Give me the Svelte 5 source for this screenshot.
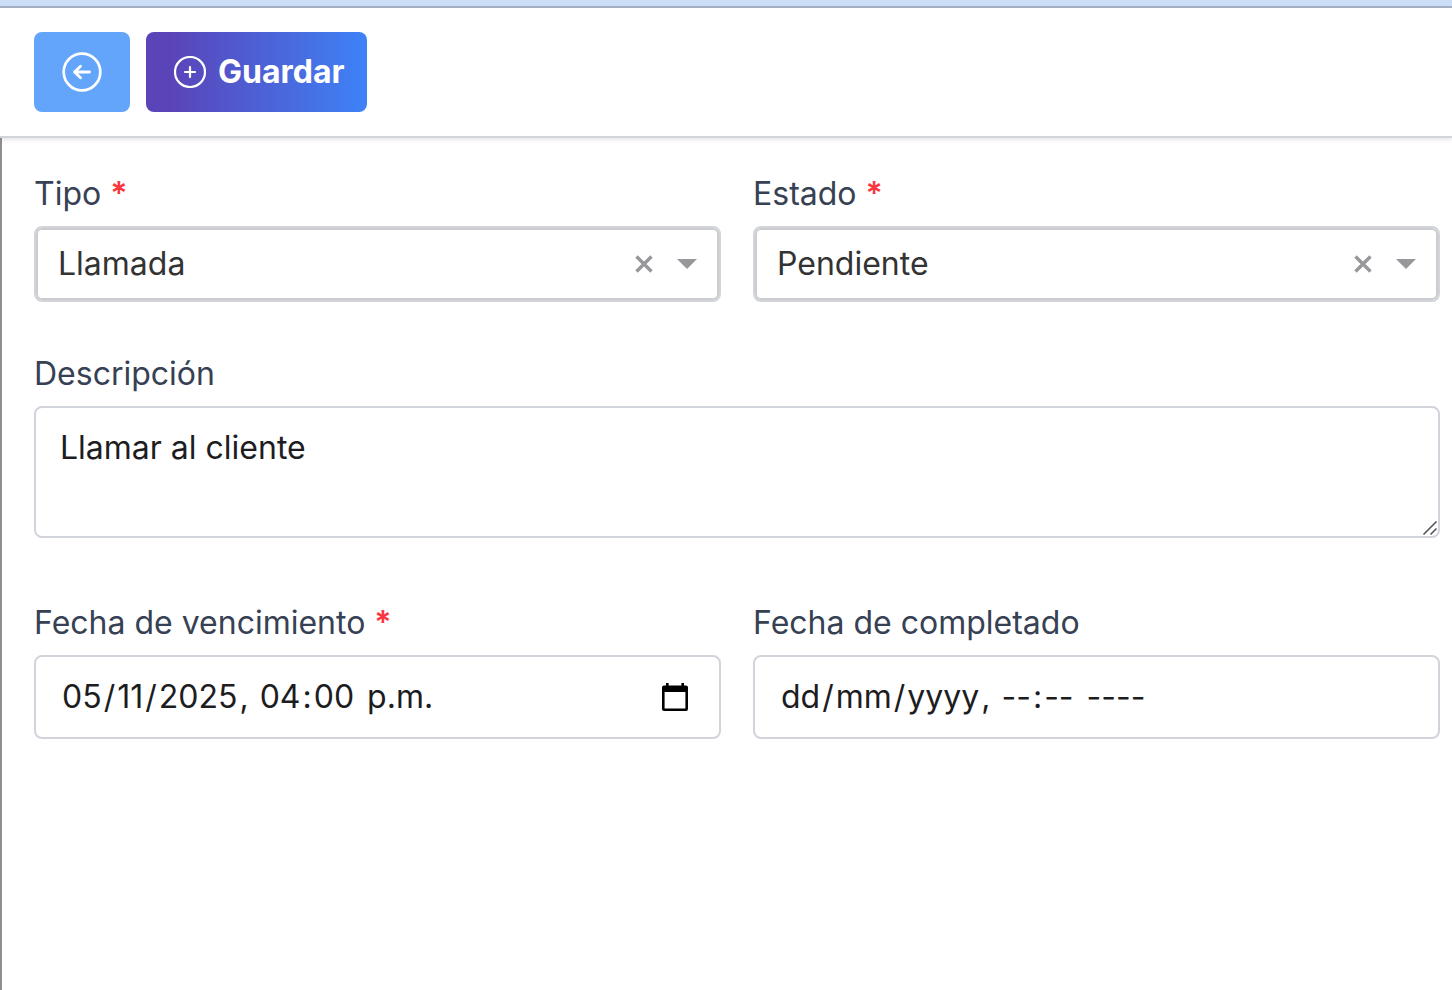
<script>
  const tipos = ['Llamada', 'Correo', 'Reunión'];
  const estados = ['Pendiente', 'Completado'];

  let tipo = $state('Llamada');
  let estado = $state('Pendiente');
  let descripcion = $state('Llamar al cliente');

  const segments = (d, m, y, h, min, p) => [
    { name: 'día', value: d, hint: 'dd', after: '/' },
    { name: 'mes', value: m, hint: 'mm', after: '/' },
    { name: 'año', value: y, hint: 'yyyy', after: ', ' },
    { name: 'hora', value: h, hint: '--', after: ':' },
    { name: 'minutos', value: min, hint: '--', after: ' ' },
    { name: 'a.m./p.m.', value: p, hint: '----', after: '' }
  ];

  let vencimiento = $state(segments('05', '11', '2025', '04', '00', 'p.m.'));
  let completado = $state(segments('', '', '', '', '', ''));
</script>

<div class="strip"></div>

<header class="toolbar">
  <button class="btn back" type="button" aria-label="Volver">
    <svg width="40" height="40" viewBox="0 0 40 40" fill="none" stroke="currentColor" stroke-linecap="round" stroke-linejoin="round">
      <circle cx="20" cy="20" r="18.3" stroke-width="2.7" />
      <path d="M27.5 20H12.5M18.5 14.2L12.5 20L18.5 25.8" stroke-width="2.8" />
    </svg>
  </button>
  <button class="btn save" type="submit" form="actividad">
    <svg width="32" height="32" viewBox="0 0 32 32" fill="none" stroke="currentColor" stroke-linecap="round">
      <circle cx="16" cy="16" r="15" stroke-width="2.2" />
      <path d="M16 11V21M11 16H21" stroke-width="2.2" />
    </svg>
    Guardar
  </button>
</header>

<main>
  <form id="actividad" onsubmit={(e) => e.preventDefault()}>
    <div class="field">
      <label for="tipo">Tipo <b>*</b></label>
      <div class="combo">
        <select id="tipo" bind:value={tipo}>
          {#each tipos as t}<option>{t}</option>{/each}
        </select>
        {@render controls(() => (tipo = ''))}
      </div>
    </div>

    <div class="field">
      <label for="estado">Estado <b>*</b></label>
      <div class="combo">
        <select id="estado" bind:value={estado}>
          {#each estados as t}<option>{t}</option>{/each}
        </select>
        {@render controls(() => (estado = ''))}
      </div>
    </div>

    <div class="field wide">
      <label for="descripcion">Descripción</label>
      <div class="area">
        <textarea id="descripcion" rows="2" bind:value={descripcion}></textarea>
        <svg class="grip" width="16" height="16" viewBox="0 0 16 16" stroke="#55555a" stroke-width="1.6" aria-hidden="true">
          <path d="M1.5 14.5L14.5 1.5M8.5 14.5L14.5 8.5" />
        </svg>
      </div>
    </div>

    <div class="field">
      <label for="vencimiento-0">Fecha de vencimiento <b>*</b></label>
      <div class="date">
        {@render dateParts('vencimiento', vencimiento)}
        <button class="plain" type="button" aria-label="Abrir calendario">
          <svg width="26" height="28" viewBox="0 0 26 28" fill="#000">
            <path fill-rule="evenodd" d="M4 0H6.6V2.6H19.4V0H22V2.6H24Q26 2.6 26 4.6V26Q26 28 24 28H2Q0 28 0 26V4.6Q0 2.6 2 2.6H4ZM2.6 9V25.4H23.4V9Z" />
          </svg>
        </button>
      </div>
    </div>

    <div class="field">
      <label for="completado-0">Fecha de completado</label>
      <div class="date">
        {@render dateParts('completado', completado)}
      </div>
    </div>
  </form>
</main>

{#snippet dateParts(id, parts)}
  <div class="parts">
    {#each parts as part, i}
      <input id={`${id}-${i}`} type="text" aria-label={part.name} placeholder={part.hint} maxlength={part.hint.length} bind:value={part.value} />{#if part.after}<span>{part.after}</span>{/if}
    {/each}
  </div>
{/snippet}

{#snippet controls(clear)}
  <button class="plain" type="button" aria-label="Limpiar" onclick={clear}>
    <svg width="18" height="18" viewBox="0 0 18 18" stroke="#98979c" stroke-width="3.4">
      <path d="M1.5 1.5L16.5 16.5M16.5 1.5L1.5 16.5" />
    </svg>
  </button>
  <svg class="caret" width="20" height="10" viewBox="0 0 20 10" fill="#98979c" aria-hidden="true">
    <path d="M0 0H20L10 10Z" />
  </svg>
{/snippet}

<style>
  :global(body) {
    margin: 0;
    background: #fff;
  }
  :global(#app) {
    display: flex;
    flex-direction: column;
    min-height: 100vh;
    font-family: Inter, 'Liberation Sans', sans-serif;
    font-size: 32px;
    line-height: 48px;
  }
  * {
    box-sizing: border-box;
  }
  button,
  select,
  input,
  textarea {
    font: inherit;
    margin: 0;
    outline: none;
  }
  svg {
    display: block;
    flex: none;
  }
  .strip {
    height: 8px;
    background: #ccddf8;
    border-bottom: 2px solid #a5b0c4;
  }
  .toolbar {
    position: relative;
    display: flex;
    gap: 16px;
    padding: 24px 34px;
    background: #fff;
    border-bottom: 2px solid #d1d5da;
    box-shadow: 0 2px 4px rgba(0, 0, 0, 0.1);
  }
  .btn {
    display: flex;
    align-items: center;
    justify-content: center;
    gap: 12px;
    height: 80px;
    border: 0;
    border-radius: 8px;
    color: #fff;
    font-weight: 700;
    cursor: pointer;
  }
  .back {
    padding: 0 28px;
    background: #62a5fb;
  }
  .save {
    padding: 0 22px 0 28px;
    background: linear-gradient(to right, #5b43b8 10%, #3e82f7);
  }
  main {
    flex: 1;
    padding: 32px 12px 32px 32px;
    border-left: 2px solid #8e8d93;
  }
  form {
    display: grid;
    grid-template-columns: 1fr 1fr;
    gap: 48px 32px;
  }
  .field {
    display: flex;
    flex-direction: column;
    gap: 8px;
    min-width: 0;
  }
  .wide {
    grid-column: 1 / -1;
    padding-bottom: 13px;
  }
  label {
    color: #374154;
  }
  label b {
    color: #fb3640;
    font-weight: 600;
  }
  .combo {
    display: flex;
    align-items: center;
    gap: 24px;
    height: 76px;
    padding-right: 22px;
    border: 2px solid #d1d5db;
    border-radius: 8px;
    box-shadow: inset 0 0 0 2px #cccccd;
  }
  select {
    flex: 1;
    min-width: 0;
    height: 100%;
    padding: 0 22px;
    appearance: none;
    border: 0;
    background: transparent;
    color: #333;
  }
  .plain {
    padding: 0;
    border: 0;
    background: none;
    cursor: pointer;
  }
  .area {
    position: relative;
    display: flex;
  }
  textarea {
    flex: 1;
    min-width: 0;
    padding: 16px 24px;
    border: 2px solid #d1d5db;
    border-radius: 8px;
    color: #1d1d1f;
    background: #fff;
    resize: none;
  }
  .grip {
    position: absolute;
    right: 2px;
    bottom: 2px;
  }
  .date {
    display: flex;
    align-items: center;
    justify-content: space-between;
    padding: 16px 31px 16px 24px;
    border: 2px solid #d1d5db;
    border-radius: 8px;
  }
  .parts {
    display: flex;
    color: #1d1d1f;
    white-space: pre;
  }
  input {
    field-sizing: content;
    height: 48px;
    padding: 0 2px;
    border: 0;
    background: none;
    color: #1d1d1f;
  }
  input::placeholder {
    color: #1d1d1f;
    opacity: 1;
  }
</style>
